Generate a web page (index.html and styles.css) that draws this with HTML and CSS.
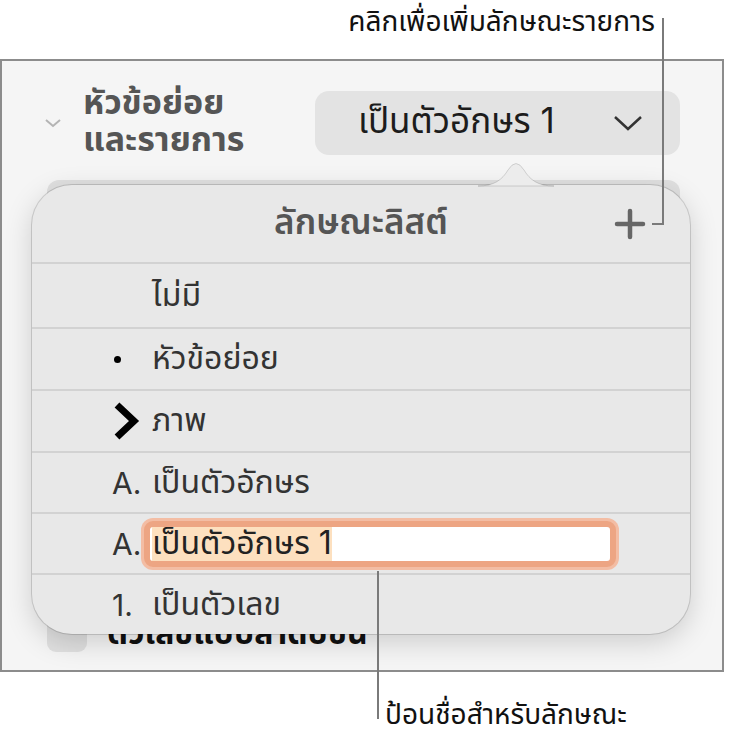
FILE: index.html
```html
<!DOCTYPE html>
<html lang="th">
<head>
    <meta charset="UTF-8">
    <meta name="viewport" content="width=device-width, initial-scale=1.0">
    <title>ลักษณะลิสต์</title>
    <link rel="stylesheet" href="styles.css">
</head>
<body>

<div class="page">
    <p class="note note-top">คลิกเพื่อเพิ่มลักษณะรายการ</p>

    <section class="panel">
        <div class="head">
            <svg class="fold" width="20" height="12" viewBox="0 0 20 12">
                <polyline points="3,3 10,9 17,3" />
            </svg>
            <h3 class="head-title">หัวข้อย่อย<br>และรายการ</h3>
            <button class="select">
                <span>เป็นตัวอักษร 1</span>
                <svg width="30" height="18" viewBox="0 0 30 18">
                    <polyline points="2,3 15,15 28,3" />
                </svg>
            </button>
        </div>

        <div class="bar"></div>

        <label class="check-row">
            <span class="check"></span>
            <span class="check-label">ตัวเลขแบบลำดับชั้น</span>
        </label>

        <!-- list style popover -->
        <div class="popover">
            <svg class="popover-arrow" width="76" height="29" viewBox="0 0 76 29">
                <path d="M0 28 C 16 28 24 22 30 12 Q 38 -1 46 12 C 52 22 60 28 76 28 Z" />
            </svg>
            <div class="pop-head">
                <span class="pop-title">ลักษณะลิสต์</span>
                <svg class="add" width="32" height="32" viewBox="0 0 32 32">
                    <line x1="16" y1="3" x2="16" y2="29" />
                    <line x1="3" y1="16" x2="29" y2="16" />
                </svg>
            </div>
            <div class="row">
                <span class="mark"></span>
                <span>ไม่มี</span>
            </div>
            <div class="row">
                <span class="mark"><i class="dot"></i></span>
                <span>หัวข้อย่อย</span>
            </div>
            <div class="row">
                <span class="mark">
                    <svg width="30" height="40" viewBox="0 0 30 40">
                        <polyline points="5,4 22,20 5,36" />
                    </svg>
                </span>
                <span>ภาพ</span>
            </div>
            <div class="row">
                <span class="mark latin">A.</span>
                <span>เป็นตัวอักษร</span>
            </div>
            <div class="row">
                <span class="mark latin">A.</span>
                <div class="field"><span class="selected">เป็นตัวอักษร 1</span></div>
            </div>
            <div class="row">
                <span class="mark latin">1.</span>
                <span>เป็นตัวเลข</span>
            </div>
        </div>
    </section>

    <p class="note note-bottom">ป้อนชื่อสำหรับลักษณะ</p>

    <!-- callout leader lines -->
    <svg class="leaders" width="732" height="742" viewBox="0 0 732 742">
        <polyline points="663,18 663,224 652,224" />
        <line x1="378" y1="571" x2="378" y2="719" />
    </svg>
</div>

</body>
</html>
```

FILE: styles.css
```css
body {
    margin: 0;
    background: #ffffff;
    font-family: "Inter", "Noto Sans Thai", "Noto Sans", "DejaVu Sans", sans-serif;
    color: #222;
}

.page {
    position: relative;
    width: 732px;
    height: 742px;
    overflow: hidden;
}

.note {
    margin: 0;
    font-size: 28px;
    color: #111;
}

.note-top {
    height: 59px;
    line-height: 42px;
    padding-right: 77px;
    text-align: right;
}

.note-bottom {
    padding: 24px 0 0 385px;
    line-height: 36px;
}

.leaders {
    position: absolute;
    top: 0;
    left: 0;
    pointer-events: none;
}

.leaders polyline,
.leaders line {
    fill: none;
    stroke: #7a7a7a;
    stroke-width: 2;
}

/* sidebar panel */
.panel {
    position: relative;
    display: flex;
    flex-direction: column;
    box-sizing: border-box;
    width: 724px;
    height: 613px;
    border: 2px solid #8c8c8c;
    background: #f5f5f5;
}

.head {
    display: flex;
    align-items: center;
    padding: 27px 42px 0 41px;
}

.fold polyline {
    fill: none;
    stroke: #b4b4b4;
    stroke-width: 2;
}

.head-title {
    margin: -5px 0 0 20px;
    font-size: 34px;
    line-height: 37px;
    font-weight: 700;
    color: #555;
}

.select {
    display: flex;
    align-items: center;
    justify-content: space-between;
    box-sizing: border-box;
    width: 365px;
    height: 64px;
    margin-left: auto;
    padding: 0 37px 0 43px;
    border: none;
    border-radius: 14px;
    background: #e3e3e3;
    font-family: inherit;
    font-size: 35px;
    color: #1c1c1c;
}

.select polyline {
    fill: none;
    stroke: #333;
    stroke-width: 2.5;
}

.bar {
    height: 70px;
    margin: 23px 42px 0 45px;
    border-radius: 12px;
    background: #e0e0e0;
}

.check-row {
    display: flex;
    align-items: flex-end;
    gap: 20px;
    margin: auto 0 18px 45px;
    font-size: 32px;
    font-weight: 700;
    color: #111;
}

.check {
    width: 40px;
    height: 40px;
    border-radius: 9px;
    background: #e0e0e0;
}

.check-label {
    line-height: 38px;
}

/* popover */
.popover {
    position: absolute;
    top: 124px;
    left: 30px;
    width: 658px;
    height: 449px;
    display: grid;
    grid-template-rows: 77px 65px 62px 62px 61px 61px 61px;
    border-radius: 40px;
    background: #e8e8e8;
    box-shadow: 0 0 0 1px rgba(0, 0, 0, 0.14), 0 8px 28px rgba(0, 0, 0, 0.17);
}

.popover-arrow {
    position: absolute;
    top: -27px;
    left: 446px;
}

.popover-arrow path {
    fill: #ececec;
    stroke: rgba(0, 0, 0, 0.14);
    stroke-width: 1;
}

.pop-head {
    display: grid;
    grid-template-columns: 1fr auto 1fr;
    align-items: center;
}

.pop-title {
    grid-column: 2;
    font-size: 35px;
    font-weight: 600;
    color: #555;
}

.add {
    grid-column: 3;
    justify-self: end;
    margin-right: 44px;
}

.add line {
    stroke: #666;
    stroke-width: 4.5;
    stroke-linecap: round;
}

.row {
    display: flex;
    align-items: center;
    box-sizing: border-box;
    padding-left: 80px;
    border-top: 2px solid #d2d2d2;
    font-size: 32px;
    color: #333;
}

.mark {
    display: flex;
    align-items: center;
    flex: none;
    width: 40px;
}

.mark polyline {
    fill: none;
    stroke: #000;
    stroke-width: 7;
    stroke-linejoin: miter;
}

.latin {
    font-family: "Inter", sans-serif;
    font-size: 30px;
}

.dot {
    width: 7px;
    height: 7px;
    margin-left: 2px;
    border-radius: 50%;
    background: #000;
}

.field {
    display: flex;
    box-sizing: border-box;
    width: 472px;
    height: 46px;
    margin-left: -8px;
    padding-left: 2px;
    border: 6px solid #eda583;
    border-radius: 9px;
    box-shadow: 0 0 0 3px #f3bda4;
    background: #fff;
}

.selected {
    display: flex;
    align-items: center;
    background: #fde0bf;
    color: #222;
}
```
